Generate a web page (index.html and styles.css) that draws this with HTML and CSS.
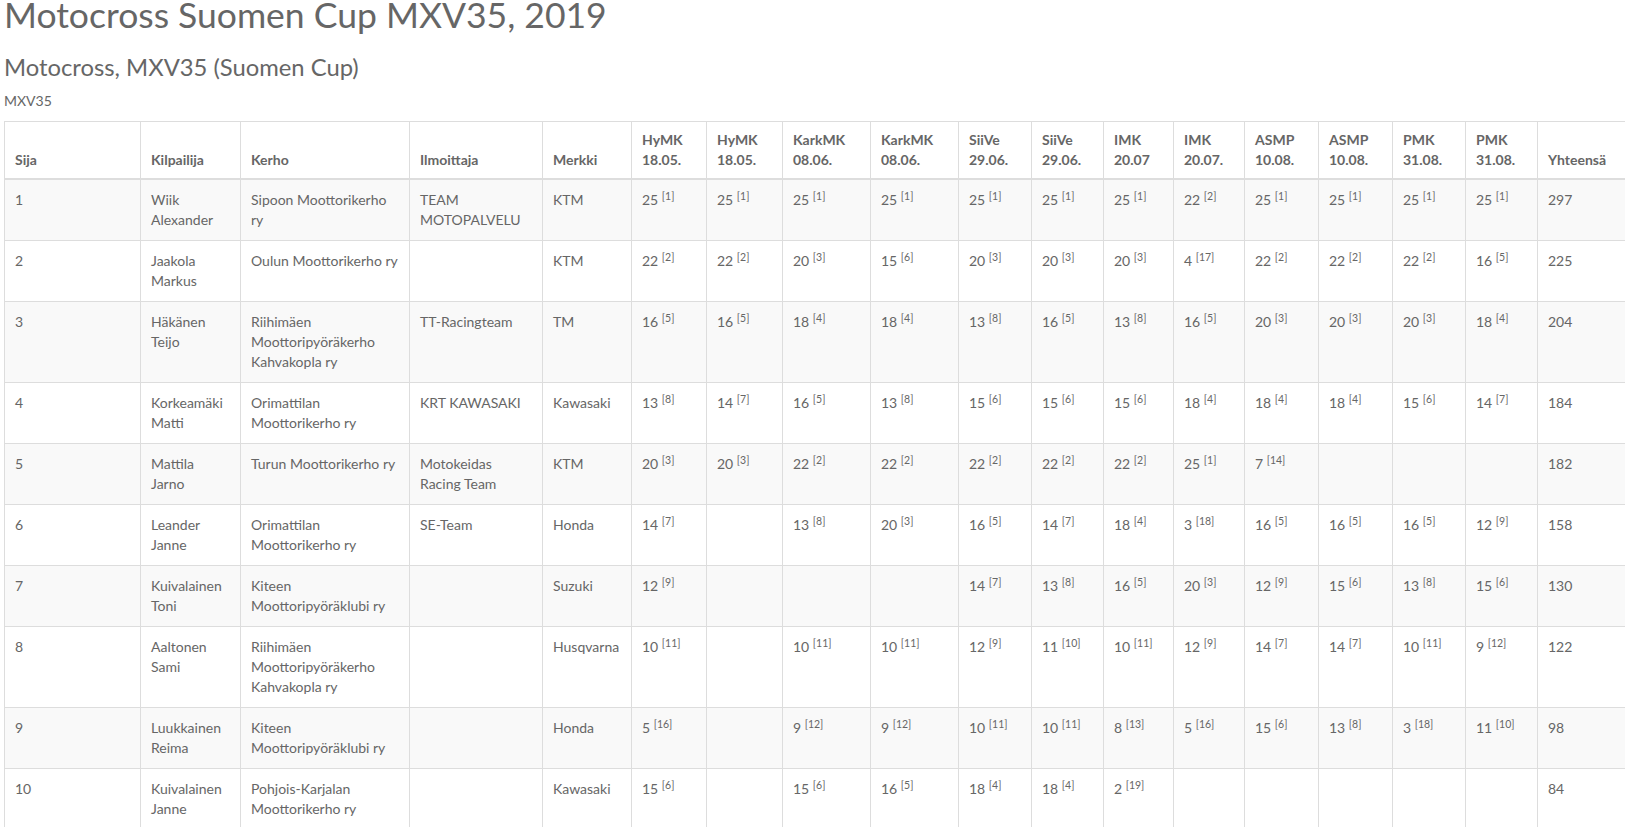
FILE: index.html
```html
<!DOCTYPE html>
<html lang="fi">
<head>
<meta charset="utf-8">
<title>Motocross Suomen Cup MXV35, 2019</title>
<link rel="stylesheet" href="styles.css">
</head>
<body>
<div class="page">
  <h1 class="title">Motocross Suomen Cup MXV35, 2019</h1>
  <h2 class="subtitle">Motocross, MXV35 (Suomen Cup)</h2>
  <div class="class-name">MXV35</div>
  <table class="results">
    <colgroup>
      <col class="c-pos"><col class="c-name"><col class="c-club"><col class="c-team"><col class="c-brand">
      <col class="c-r1"><col class="c-r2"><col class="c-r3"><col class="c-r4"><col class="c-r5"><col class="c-r6">
      <col class="c-r7"><col class="c-r8"><col class="c-r9"><col class="c-r10"><col class="c-r11"><col class="c-r12">
      <col class="c-total">
    </colgroup>
    <thead>
      <tr>
        <th>Sija</th><th>Kilpailija</th><th>Kerho</th><th>Ilmoittaja</th><th>Merkki</th>
        <th>HyMK<br>18.05.</th><th>HyMK<br>18.05.</th><th>KarkMK<br>08.06.</th><th>KarkMK<br>08.06.</th>
        <th>SiiVe<br>29.06.</th><th>SiiVe<br>29.06.</th><th>IMK<br>20.07</th><th>IMK<br>20.07.</th>
        <th>ASMP<br>10.08.</th><th>ASMP<br>10.08.</th><th>PMK<br>31.08.</th><th>PMK<br>31.08.</th><th>Yhteensä</th>
      </tr>
    </thead>
    <tbody>
      <tr>
        <td>1</td><td>Wiik Alexander</td><td>Sipoon Moottorikerho ry</td><td>TEAM MOTOPALVELU</td><td>KTM</td>
        <td>25 <sup>[1]</sup></td><td>25 <sup>[1]</sup></td><td>25 <sup>[1]</sup></td><td>25 <sup>[1]</sup></td>
        <td>25 <sup>[1]</sup></td><td>25 <sup>[1]</sup></td><td>25 <sup>[1]</sup></td><td>22 <sup>[2]</sup></td>
        <td>25 <sup>[1]</sup></td><td>25 <sup>[1]</sup></td><td>25 <sup>[1]</sup></td><td>25 <sup>[1]</sup></td>
        <td>297</td>
      </tr>
      <tr>
        <td>2</td><td>Jaakola Markus</td><td>Oulun Moottorikerho ry</td><td></td><td>KTM</td>
        <td>22 <sup>[2]</sup></td><td>22 <sup>[2]</sup></td><td>20 <sup>[3]</sup></td><td>15 <sup>[6]</sup></td>
        <td>20 <sup>[3]</sup></td><td>20 <sup>[3]</sup></td><td>20 <sup>[3]</sup></td><td>4 <sup>[17]</sup></td>
        <td>22 <sup>[2]</sup></td><td>22 <sup>[2]</sup></td><td>22 <sup>[2]</sup></td><td>16 <sup>[5]</sup></td>
        <td>225</td>
      </tr>
      <tr>
        <td>3</td><td>Häkänen Teijo</td><td>Riihimäen Moottoripyöräkerho Kahvakopla ry</td><td>TT-Racingteam</td><td>TM</td>
        <td>16 <sup>[5]</sup></td><td>16 <sup>[5]</sup></td><td>18 <sup>[4]</sup></td><td>18 <sup>[4]</sup></td>
        <td>13 <sup>[8]</sup></td><td>16 <sup>[5]</sup></td><td>13 <sup>[8]</sup></td><td>16 <sup>[5]</sup></td>
        <td>20 <sup>[3]</sup></td><td>20 <sup>[3]</sup></td><td>20 <sup>[3]</sup></td><td>18 <sup>[4]</sup></td>
        <td>204</td>
      </tr>
      <tr>
        <td>4</td><td>Korkeamäki Matti</td><td>Orimattilan Moottorikerho ry</td><td>KRT KAWASAKI</td><td>Kawasaki</td>
        <td>13 <sup>[8]</sup></td><td>14 <sup>[7]</sup></td><td>16 <sup>[5]</sup></td><td>13 <sup>[8]</sup></td>
        <td>15 <sup>[6]</sup></td><td>15 <sup>[6]</sup></td><td>15 <sup>[6]</sup></td><td>18 <sup>[4]</sup></td>
        <td>18 <sup>[4]</sup></td><td>18 <sup>[4]</sup></td><td>15 <sup>[6]</sup></td><td>14 <sup>[7]</sup></td>
        <td>184</td>
      </tr>
      <tr>
        <td>5</td><td>Mattila Jarno</td><td>Turun Moottorikerho ry</td><td>Motokeidas Racing Team</td><td>KTM</td>
        <td>20 <sup>[3]</sup></td><td>20 <sup>[3]</sup></td><td>22 <sup>[2]</sup></td><td>22 <sup>[2]</sup></td>
        <td>22 <sup>[2]</sup></td><td>22 <sup>[2]</sup></td><td>22 <sup>[2]</sup></td><td>25 <sup>[1]</sup></td>
        <td>7 <sup>[14]</sup></td><td></td><td></td><td></td>
        <td>182</td>
      </tr>
      <tr>
        <td>6</td><td>Leander Janne</td><td>Orimattilan Moottorikerho ry</td><td>SE-Team</td><td>Honda</td>
        <td>14 <sup>[7]</sup></td><td></td><td>13 <sup>[8]</sup></td><td>20 <sup>[3]</sup></td>
        <td>16 <sup>[5]</sup></td><td>14 <sup>[7]</sup></td><td>18 <sup>[4]</sup></td><td>3 <sup>[18]</sup></td>
        <td>16 <sup>[5]</sup></td><td>16 <sup>[5]</sup></td><td>16 <sup>[5]</sup></td><td>12 <sup>[9]</sup></td>
        <td>158</td>
      </tr>
      <tr>
        <td>7</td><td>Kuivalainen Toni</td><td>Kiteen Moottoripyöräklubi ry</td><td></td><td>Suzuki</td>
        <td>12 <sup>[9]</sup></td><td></td><td></td><td></td>
        <td>14 <sup>[7]</sup></td><td>13 <sup>[8]</sup></td><td>16 <sup>[5]</sup></td><td>20 <sup>[3]</sup></td>
        <td>12 <sup>[9]</sup></td><td>15 <sup>[6]</sup></td><td>13 <sup>[8]</sup></td><td>15 <sup>[6]</sup></td>
        <td>130</td>
      </tr>
      <tr>
        <td>8</td><td>Aaltonen Sami</td><td>Riihimäen Moottoripyöräkerho Kahvakopla ry</td><td></td><td>Husqvarna</td>
        <td>10 <sup>[11]</sup></td><td></td><td>10 <sup>[11]</sup></td><td>10 <sup>[11]</sup></td>
        <td>12 <sup>[9]</sup></td><td>11 <sup>[10]</sup></td><td>10 <sup>[11]</sup></td><td>12 <sup>[9]</sup></td>
        <td>14 <sup>[7]</sup></td><td>14 <sup>[7]</sup></td><td>10 <sup>[11]</sup></td><td>9 <sup>[12]</sup></td>
        <td>122</td>
      </tr>
      <tr>
        <td>9</td><td>Luukkainen Reima</td><td>Kiteen Moottoripyöräklubi ry</td><td></td><td>Honda</td>
        <td>5 <sup>[16]</sup></td><td></td><td>9 <sup>[12]</sup></td><td>9 <sup>[12]</sup></td>
        <td>10 <sup>[11]</sup></td><td>10 <sup>[11]</sup></td><td>8 <sup>[13]</sup></td><td>5 <sup>[16]</sup></td>
        <td>15 <sup>[6]</sup></td><td>13 <sup>[8]</sup></td><td>3 <sup>[18]</sup></td><td>11 <sup>[10]</sup></td>
        <td>98</td>
      </tr>
      <tr>
        <td>10</td><td>Kuivalainen Janne</td><td>Pohjois-Karjalan Moottorikerho ry</td><td></td><td>Kawasaki</td>
        <td>15 <sup>[6]</sup></td><td></td><td>15 <sup>[6]</sup></td><td>16 <sup>[5]</sup></td>
        <td>18 <sup>[4]</sup></td><td>18 <sup>[4]</sup></td><td>2 <sup>[19]</sup></td><td></td>
        <td></td><td></td><td></td><td></td>
        <td>84</td>
      </tr>
    </tbody>
  </table>
</div>
</body>
</html>
```

FILE: styles.css
```css
html, body {
  margin: 0;
  padding: 0;
  background: #fff;
}

.page {
  padding: 0 0 0 4px;
  font-family: Lato, "Open Sans", "Liberation Sans", sans-serif;
  color: #666;
  font-size: 14px;
  line-height: 20px;
}

.title {
  margin: 0;
  font-size: 35.5px;
  font-weight: 400;
  line-height: 30px;
  color: #666;
}

.subtitle {
  margin: 24px 0 0;
  font-size: 23.8px;
  font-weight: 400;
  line-height: 27px;
  color: #666;
}

.class-name {
  margin: 11px 0 0;
  font-size: 14px;
  line-height: 18px;
}

.results {
  margin-top: 11px;
  width: 1621px;
  table-layout: fixed;
  border-collapse: collapse;
  border: 1px solid #ddd;
}

.c-pos { width: 136px; }
.c-name { width: 100px; }
.c-club { width: 169px; }
.c-team { width: 133px; }
.c-brand { width: 89px; }
.c-r1 { width: 75px; }
.c-r2 { width: 76px; }
.c-r3 { width: 88px; }
.c-r4 { width: 88px; }
.c-r5 { width: 73px; }
.c-r6 { width: 72px; }
.c-r7 { width: 70px; }
.c-r8 { width: 71px; }
.c-r9 { width: 74px; }
.c-r10 { width: 74px; }
.c-r11 { width: 73px; }
.c-r12 { width: 72px; }
.c-total { width: 88px; }

.results th {
  text-align: left;
  vertical-align: bottom;
  font-weight: 700;
  padding: 8px 10px;
  border: 1px solid #ddd;
  border-bottom: 2px solid #ddd;
}

.results td {
  vertical-align: top;
  padding: 10px;
  border: 1px solid #ddd;
}

.results tbody tr:nth-child(odd) {
  background: #f9f9f9;
}

.results sup {
  font-size: 75%;
  line-height: 0;
  position: relative;
  vertical-align: baseline;
  top: -0.5em;
}
```
